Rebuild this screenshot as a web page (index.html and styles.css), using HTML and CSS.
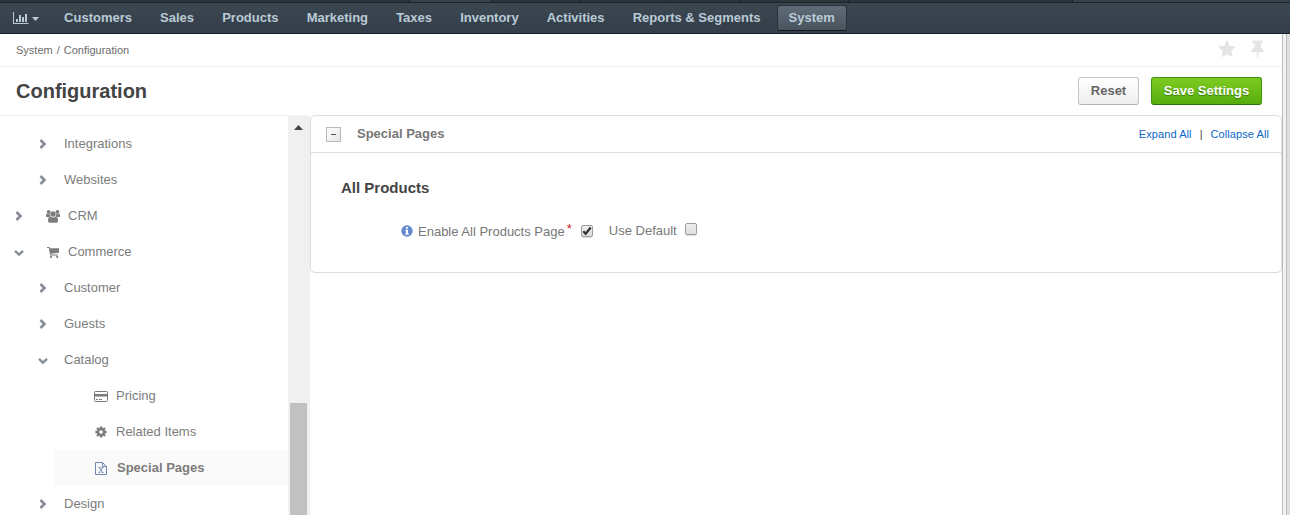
FILE: index.html
```html
<!DOCTYPE html>
<html lang="en">
<head>
<meta charset="utf-8">
<title>Configuration - System</title>
<link rel="stylesheet" href="styles.css">
</head>
<body>
<svg class="defs" width="0" height="0">
  <symbol id="right" viewBox="0 0 8 10"><path d="M1.500 1L5.500 5L1.500 9" fill="none" stroke="currentColor" stroke-width="2.500"/></symbol>
  <symbol id="down" viewBox="0 0 10 8"><path d="M1 1.800L5 5.600L9 1.800" fill="none" stroke="currentColor" stroke-width="2.300"/></symbol>
</svg>
<div class="strip"><i class="tab tab-a"></i><i class="tab tab-b light"></i><i class="tab tab-c"></i><i class="tab tab-c"></i><i class="tab tab-d"></i><i class="tab tab-e"></i><i class="tab tab-f"></i><i class="tab light rest"></i></div>
<nav class="nav">
  <a class="dash">
    <svg width="16" height="13" viewBox="0 0 16 13"><path d="M0 0H1V11H15.500V12H0ZM3 7H5V10H3ZM6 3H8V10H6ZM9 5H11V10H9ZM12 2H14V10H12Z" fill="currentColor"/></svg>
    <svg class="caret" width="7" height="4" viewBox="0 0 7 4"><path d="M0 0H7L3.500 4Z" fill="currentColor"/></svg>
  </a>
  <a class="item">Customers</a><a class="item">Sales</a><a class="item">Products</a><a class="item">Marketing</a><a class="item">Taxes</a><a class="item">Inventory</a><a class="item">Activities</a><a class="item">Reports &amp; Segments</a><a class="item active">System</a>
</nav>
<div class="body">
  <main class="page">
    <div class="crumbs">
      <span>System</span><span class="slash">/</span><span>Configuration</span>
      <div class="marks">
        <svg width="18" height="18" viewBox="0 0 18 18"><path d="M9 0L11.700 5.800L18 6.600L13.400 11L14.600 17.300L9 14.200L3.400 17.300L4.600 11L0 6.600L6.300 5.800Z" fill="currentColor"/></svg>
        <svg width="13" height="18" viewBox="0 0 13 18"><path d="M1.500 .5H11.500V3H10V8Q12.800 9.500 12.800 12H7.400L6.800 18H6.200L5.600 12H.2Q.2 9.500 3 8V3H1.500Z" fill="currentColor"/><path d="M4.700 3.500V8" stroke="#fff" stroke-width=".6"/></svg>
      </div>
    </div>
    <div class="titlebar">
      <h1>Configuration</h1>
      <button class="btn">Reset</button>
      <button class="btn save">Save Settings</button>
    </div>
    <div class="content">
      <aside class="tree">
        <div class="row sub"><svg class="chev" width="8" height="10"><use href="#right"/></svg><span>Integrations</span></div>
        <div class="row sub"><svg class="chev" width="8" height="10"><use href="#right"/></svg><span>Websites</span></div>
        <div class="row top"><svg class="chev" width="8" height="10"><use href="#right"/></svg>
          <svg class="ico" width="14" height="13" viewBox="0 0 14 13"><g fill="currentColor"><circle cx="2.600" cy="2" r="1.900"/><circle cx="11.400" cy="2" r="1.900"/><path d="M0 7V5Q0 3.700 1.200 3.900Q2.600 4.600 3.900 4Q3.700 5.500 4.500 6.400Q3.500 6.400 2.900 7ZM14 7V5Q14 3.700 12.800 3.900Q11.400 4.600 10.100 4Q10.300 5.500 9.500 6.400Q10.500 6.400 11.100 7Z"/><circle cx="7" cy="4" r="2.700"/><path d="M4.200 6.600Q7 8.500 9.800 6.600Q12 7 12 11Q12 12.700 10.300 12.700H3.700Q2 12.700 2 11Q2 7 4.200 6.600Z"/></g></svg>
          <span>CRM</span></div>
        <div class="row top"><svg class="chev" width="10" height="8"><use href="#down"/></svg>
          <svg class="ico cart" width="12" height="11" viewBox="0 0 12 11"><path d="M0 0H2.500L2.900 1.200H12V5.800L4 6.800L4.200 7.600H11V8.600H3.300L1.800 1H0Z" fill="currentColor"/><circle cx="4" cy="9.900" r="1.100" fill="currentColor"/><circle cx="10.200" cy="9.900" r="1.100" fill="currentColor"/></svg>
          <span>Commerce</span></div>
        <div class="row sub"><svg class="chev" width="8" height="10"><use href="#right"/></svg><span>Customer</span></div>
        <div class="row sub"><svg class="chev" width="8" height="10"><use href="#right"/></svg><span>Guests</span></div>
        <div class="row sub"><svg class="chev" width="10" height="8"><use href="#down"/></svg><span>Catalog</span></div>
        <div class="row leaf">
          <svg class="ico" width="14" height="11" viewBox="0 0 14 11"><rect x=".5" y=".5" width="13" height="10" rx=".8" fill="none" stroke="currentColor"/><path d="M1 3H13V5.400H1ZM2 8H4V9H2ZM5 8H8V9H5Z" fill="currentColor"/></svg>
          <span>Pricing</span></div>
        <div class="row leaf">
          <svg class="ico" width="12" height="12" viewBox="-6 -6 12 12"><circle r="3.100" fill="none" stroke="currentColor" stroke-width="2.600"/><path d="M0 -5.600V-3.800M0 5.600V3.800M-5.600 0H-3.800M5.600 0H3.800M-4 -4L-2.800 -2.800M4 4L2.800 2.800M-4 4L-2.800 2.800M4 -4L2.800 -2.800" stroke="currentColor" stroke-width="2.300"/></svg>
          <span>Related Items</span></div>
        <div class="row leaf selected">
          <svg class="ico" width="12" height="13" viewBox="0 0 12 13"><path d="M.5 .5H7.500L11.500 4.500V12.500H.5ZM7.500 .5V4.500H11.500" fill="none" stroke="currentColor"/><path d="M3.500 5.500H5.500M6.500 5.500H8.500M3.500 10.500H5.300M6.700 10.500H8.500M4.300 5.500L7.700 10.500M7.700 5.500L4.300 10.500" fill="none" stroke="currentColor" stroke-width=".9"/></svg>
          <span>Special Pages</span></div>
        <div class="row sub"><svg class="chev" width="8" height="10"><use href="#right"/></svg><span>Design</span></div>
      </aside>
      <div class="scroll"><svg width="9" height="5" viewBox="0 0 9 5"><path d="M0 5L4.500 0L9 5Z" fill="#444"/></svg><div class="thumb"></div></div>
      <section class="panel">
        <header class="head">
          <span class="toggle"></span><h2>Special Pages</h2>
          <div class="links"><a>Expand All</a><span>|</span><a>Collapse All</a></div>
        </header>
        <div class="fields">
          <h3>All Products</h3>
          <div class="field">
            <svg class="info" width="12" height="12" viewBox="0 0 12 12"><circle cx="6" cy="6" r="5.700" fill="#6389d0"/><path d="M5 2H7V3.700H5ZM4.300 4.800H7V8.500H7.900V9.700H4.200V8.500H5V6H4.300Z" fill="#fff"/></svg>
            <span class="label">Enable All Products Page</span><span class="req">*</span>
            <span class="check"><svg width="10" height="10" viewBox="0 0 10 10"><path d="M1.300 5.300L3.700 7.700L8.700 1.600" fill="none" stroke="#333" stroke-width="2.300"/></svg></span>
            <span class="default">Use Default</span><span class="check off"></span>
          </div>
        </div>
      </section>
    </div>
  </main>
  <div class="gutter"></div>
</div>
</body>
</html>
```
FILE: styles.css
```css
* { box-sizing: border-box; }
body { margin: 0; height: 515px; overflow: hidden; background: #fff; color: #777; font: 13px/18px "Liberation Sans", Arial, sans-serif; display: flex; flex-direction: column; }
svg { display: block; flex: none; }
h1, h2, h3 { margin: 0; }
.defs { position: absolute; }
.strip { flex: none; height: 3px; display: flex; background: #2c343c; border-bottom: 1px solid #1d242c; }
.tab { border-right: 1px solid #1b2229; }
.tab-a { width: 410px; }
.tab-b { width: 82px; }
.tab-c { width: 87.500px; }
.tab-d { width: 73px; }
.tab-e { width: 109px; }
.tab-f { width: 224px; }
.light { background: #35414b; }
.rest { flex: 1; border: 0; }
.nav { flex: none; height: 31px; display: flex; align-items: flex-start; gap: 4.100px; padding-top: 2px; background: linear-gradient(#3a4750, #363e4b); border-bottom: 1px solid #1c2030; color: #b9cbd6; font-weight: bold; }
.dash { display: flex; width: 48px; padding: 7px 0 0 13px; }
.caret { margin: 5px 0 0 3px; }
.item { height: 26px; padding: 0 11px; border: 1px solid transparent; border-radius: 3px; line-height: 24px; }
.item.active { background: linear-gradient(#5f6b78, #48535d); border-color: #29323a; border-bottom-color: #15191e; }
.body { flex: 1; min-height: 0; display: flex; }
.page { width: 1282px; display: flex; flex-direction: column; }
.gutter { width: 8px; border-left: 1px solid #bbb; background: linear-gradient(90deg, #f2f2f2 3px, #bdbdbd 3px 4px, #dedede 4px); }
.crumbs { flex: none; height: 33px; padding: 0 18px 0 16px; display: flex; align-items: center; font-size: 11px; border-bottom: 1px solid #eee; color: #6b6b6b; }
.slash { margin: 0 4px; }
.marks { margin: -2px 0 0 auto; display: flex; gap: 15px; color: #e4e4e4; }
.titlebar { flex: none; height: 48px; padding: 0 20px 0 16px; display: flex; align-items: center; gap: 12px; }
h1 { margin-right: auto; font-size: 20px; line-height: 24px; color: #444; }
.btn { width: 61px; height: 28px; padding: 0; border: 1px solid #c4c4c4; border-bottom-color: #b3b3b3; border-radius: 3px; background: linear-gradient(#fff, #eee); color: #666; font: bold 13px/24px "Liberation Sans", Arial, sans-serif; }
.save { width: 111px; border-color: #3f9414; border-bottom-color: #2c7609; background: linear-gradient(#7dcb20, #56ad0d); color: #fff; text-shadow: 0 1px 1px #387a08; }
.content { flex: 1; min-height: 0; display: flex; align-items: flex-start; }
.tree { width: 288px; padding-top: 10px; border-top: 1px solid #eee; }
.row { height: 36px; display: flex; align-items: center; color: #7c7c7c; }
.chev { color: #858b94; }
.sub .chev { margin-left: 39px; margin-right: 17px; }
.sub .chev[width="10"] { margin: 2px 16px 0 38px; }
.top .chev { margin-left: 15px; }
.top .chev[width="10"] { margin: 2px 0 0 14px; }
.top .ico { margin-left: 23px; margin-right: 8px; }
.top .cart { margin-right: 9px; }
.leaf { margin-left: 54px; padding-left: 40px; }
.leaf .ico { margin-right: 8px; }
.leaf .ico[width="12"] { margin-left: 1px; margin-right: 9px; }
.leaf.selected .ico { margin-right: 10px; color: #7189ae; }
.selected { font-weight: bold; background: linear-gradient(#fafafa 35px, #fff 35px); }
.scroll { width: 22px; height: 100%; padding-top: 9px; background: #f0f0f0; border-top: 1px solid #f5f5f5; }
.scroll svg { margin-left: 6px; }
.thumb { width: 17px; height: 112px; margin: 273px 0 0 2px; background: #c1c1c1; }
.panel { width: 972px; height: 158px; border: 1px solid #ddd; border-radius: 5px; }
.head { height: 37px; padding: 0 12px 0 15px; display: flex; align-items: center; border-bottom: 1px solid #ddd; }
.toggle { width: 15px; height: 15px; margin-top: 1px; border: 1px solid #b9b9b9; background: linear-gradient(135deg, #fff, #e5e5e5); display: flex; align-items: center; justify-content: center; }
.toggle::after { content: ""; width: 5px; height: 1px; background: #555; }
h2 { margin-left: 16px; font-size: 13px; line-height: 18px; color: #777; }
.links { margin-left: auto; display: flex; gap: 8px; font-size: 11px; letter-spacing: .08px; color: #444; }
.links a { color: #0c66c8; }
.fields { padding: 25px 0 0 30px; }
h3 { font-size: 15px; line-height: 20px; color: #444; }
.field { display: flex; margin: 23px 0 0 60px; color: #777; }
.info { margin-top: 4px; }
.label { margin: 2px 2px 0 5px; }
.req { margin-top: -1px; color: #d2222d; }
.check { width: 12px; height: 12px; margin: 4px 0 0 9px; border: 1px solid #9d9d9d; border-radius: 2px; background: linear-gradient(#eee, #ddd); box-shadow: 0 1px 1px #ddd; }
.default { margin: 1px 0 0 16px; }
.off { margin: 2px 0 0 8px; }
```
